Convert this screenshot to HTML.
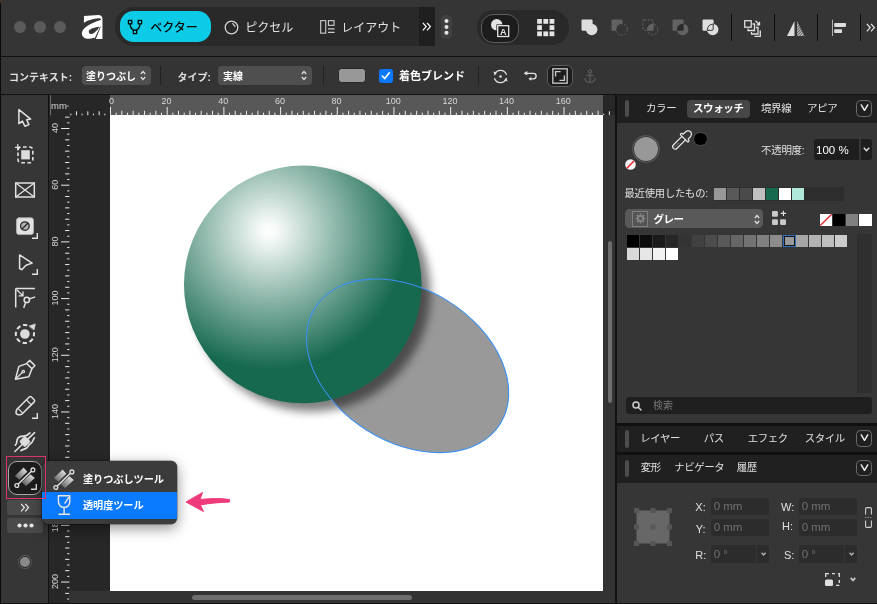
<!DOCTYPE html>
<html lang="ja">
<head>
<meta charset="utf-8">
<title>Affinity</title>
<style>
*{box-sizing:border-box;margin:0;padding:0}
html,body{width:877px;height:604px;overflow:hidden;background:#1a1a1a}
body{font-family:"Liberation Sans","Noto Sans CJK JP",sans-serif;color:#dcdcdc;font-size:11px;position:relative}
.abs{position:absolute}
#app{position:absolute;left:0;top:0;width:877px;height:604px;overflow:hidden;background:#121212;will-change:transform}
/* title bar */
#titlebar{position:absolute;left:0;top:0;width:877px;height:56px;background:#353535}
#ctxbar{position:absolute;left:0;top:57px;width:877px;height:37px;background:#343434}
.tl{position:absolute;top:21px;width:12px;height:12px;border-radius:50%;background:#5b5b5b}
.t{position:absolute;white-space:nowrap;line-height:1}
svg{position:absolute;overflow:visible}
svg{will-change:transform}
/* left tools */
#tools{position:absolute;left:0;top:95px;width:48px;height:507.600px;background:#363636}
/* canvas area */
#work{position:absolute;left:49px;top:95px;width:566px;height:507.600px;background:#272727;overflow:hidden}
/* right panel */
#panel{position:absolute;left:618px;top:95px;width:259px;height:507.600px;background:#363636;box-shadow:-1px 0 0 #363636}
.phead{position:absolute;left:-1px;width:260px;background:#202020}
.grip{position:absolute;left:7px;width:4px;border-radius:2px;background:#4d4d4d}
.vbox{position:absolute;left:238px;width:16px;height:16.500px;border:1.400px solid #6c6c6c;border-radius:4.500px;margin-top:-0.700px}
.inp{position:absolute;background:#2c2c2c;border-radius:3px;color:#707070;font-size:11.5px;line-height:17px;padding-left:3px;height:17px}
.lbl{position:absolute;font-size:11px;color:#e0e0e0;line-height:1}
</style>
</head>
<body>
<div id="app">

<!-- TITLEBAR -->
<div id="titlebar">
<div class="tl" style="left:14px"></div><div class="tl" style="left:34px"></div><div class="tl" style="left:54px"></div>
<svg id="logo" style="left:70px;top:8px" width="50" height="40" viewBox="0 0 755 604">
<g fill="#ffffff"><ellipse cx="322" cy="352" rx="152" ry="103" transform="rotate(-25 322 352)"/><path d="M210 120 L425 105 Q490 105 490 172 L490 468 L380 468 L210 228 Z"/></g>
<g fill="#353535"><path d="M206 226 Q300 163 440 156 Q478 158 463 181 Q330 215 165 335 L165 226 Z"/><path d="M447 285 C400 290 330 305 298 328 C270 350 285 395 325 393 C365 390 410 340 447 285 Z"/><path d="M366 472 L389 472 L466 280 L454 283 Z"/></g>
</svg>
<!-- persona group -->
<div class="abs" style="left:115px;top:7px;width:320px;height:39px;background:#292929;border-radius:19px 0 0 19px"></div>
<div class="abs" style="left:419px;top:7px;width:16px;height:39px;background:#1f1f1f"></div>
<div class="abs" style="left:119.500px;top:11.300px;width:91.200px;height:31px;background:#0bcbe6;border-radius:13.500px"></div>
<svg style="left:127.200px;top:19.400px" width="16" height="16" viewBox="0 0 18 18" fill="none" stroke="#000" stroke-width="1.4"><path d="M3.5 5.5 C3.5 10 6 12 9 13 C12 12 14.5 10 14.5 5.500"/><rect x="1.600" y="1.600" width="3.800" height="3.800" fill="#0bcbe6"/><rect x="12.600" y="1.600" width="3.800" height="3.800" fill="#0bcbe6"/><rect x="7.100" y="12.600" width="3.800" height="3.800" fill="#0bcbe6"/></svg>
<div class="t" style="left:150.300px;top:21.600px;font-size:12px;color:#000;font-weight:500">ベクター</div>
<svg style="left:223.500px;top:19.800px" width="15" height="15" viewBox="0 0 15 15" fill="none" stroke="#d4d4d4" stroke-width="1.300"><circle cx="7.500" cy="7.500" r="6.300"/><path d="M8.800 3.600 L11 6.300" stroke-linecap="round"/></svg>
<div class="t" style="left:245.200px;top:21.600px;font-size:12px;color:#e2e2e2">ピクセル</div>
<svg style="left:319.500px;top:19.800px" width="15" height="14" viewBox="0 0 16 15" fill="none" stroke="#cccccc" stroke-width="1.2"><rect x="0.700" y="0.700" width="5.400" height="13.400"/><rect x="9" y="0.700" width="6" height="5"/><path d="M8.500 9.500 H15.600 M8.500 13.300 H15.600"/></svg>
<div class="t" style="left:341.200px;top:21.600px;font-size:12px;color:#e2e2e2">レイアウト</div>
<svg style="left:422.300px;top:22.200px" width="9.200" height="9.200" viewBox="0 0 11 11" fill="none" stroke="#fff" stroke-width="1.5"><path d="M1 1 L5 5.500 L1 10 M6 1 L10 5.500 L6 10"/></svg>
<div class="abs" style="left:441.200px;top:15px;width:11.200px;height:24px;background:#404040;border-radius:4.500px"></div>
<svg style="left:441px;top:15px" width="11" height="24" viewBox="0 0 11 24" fill="#e6e6e6"><circle cx="5.500" cy="6.100" r="2"/><circle cx="5.500" cy="11.900" r="2"/><circle cx="5.500" cy="17.700" r="2"/></svg>
<!-- toggle group -->
<div class="abs" style="left:477px;top:10px;width:92px;height:35px;background:#292929;border-radius:17px"></div>
<div class="abs" style="left:480.700px;top:13.600px;width:38.300px;height:29.200px;background:#1c1c1c;border:1.200px solid #5e5e5e;border-radius:12px"></div>
<svg style="left:490px;top:18px" width="22" height="20" viewBox="0 0 22 20"><circle cx="6.700" cy="6.700" r="5.700" fill="#e4e4e4"/><rect x="6.400" y="6.400" width="13.400" height="13.200" fill="#1c1c1c"/><rect x="7.700" y="7.700" width="11" height="10.800" fill="#1c1c1c" stroke="#e4e4e4" stroke-width="1.300"/><text x="13.200" y="16.500" font-size="9" font-weight="bold" fill="#e4e4e4" text-anchor="middle" font-family="Liberation Sans,sans-serif">A</text></svg>
<svg style="left:537px;top:19px" width="17.500" height="17.200" viewBox="0 0 18 18" fill="#e4e4e4"><rect x="0" y="0" width="5" height="5"/><rect x="6.500" y="0" width="5" height="5"/><rect x="13" y="0" width="5" height="5"/><rect x="0" y="6.500" width="5" height="5"/><rect x="13" y="6.500" width="5" height="5"/><rect x="0" y="13" width="5" height="5"/><rect x="6.500" y="13" width="5" height="5"/><rect x="13" y="13" width="5" height="5"/></svg>
<!-- boolean ops -->
<svg style="left:581.4px;top:19.400px" width="17" height="17" viewBox="0 0 17 17"><rect x="0.500" y="0.400" width="11.100" height="11.300" rx="1.200" fill="#dedede"/><circle cx="10.700" cy="10.500" r="5.700" fill="#dedede"/></svg>
<svg style="left:611.4px;top:19.400px" width="17" height="17" viewBox="0 0 17 17"><rect x="0.500" y="0.400" width="11.100" height="11.300" rx="1.200" fill="#626262"/><circle cx="10.700" cy="10.500" r="5.700" fill="#353535" stroke="#626262" stroke-width="1" stroke-dasharray="2.200 1.400"/></svg>
<svg style="left:641.5px;top:19.400px" width="17" height="17" viewBox="0 0 17 17"><defs><clipPath id="cpI"><rect x="0.500" y="0.400" width="11.100" height="11.300" rx="1.200"/></clipPath></defs><circle cx="10.700" cy="10.500" r="5.700" fill="#626262" clip-path="url(#cpI)"/><rect x="1" y="0.900" width="10.100" height="10.300" rx="1" fill="none" stroke="#626262" stroke-width="1" stroke-dasharray="2.200 1.400"/><circle cx="10.700" cy="10.500" r="5.200" fill="none" stroke="#626262" stroke-width="1" stroke-dasharray="2.200 1.400"/></svg>
<svg style="left:671.7px;top:19.400px" width="17" height="17" viewBox="0 0 17 17"><defs><clipPath id="cpX"><rect x="0.500" y="0.400" width="11.100" height="11.300" rx="1.200"/></clipPath></defs><rect x="0.500" y="0.400" width="11.100" height="11.300" rx="1.200" fill="#626262"/><circle cx="10.700" cy="10.500" r="5.700" fill="#626262"/><circle cx="10.700" cy="10.500" r="5.700" fill="#2a2a2a" clip-path="url(#cpX)"/></svg>
<svg style="left:701.5px;top:19.400px" width="17" height="17" viewBox="0 0 17 17"><defs><clipPath id="cpC"><circle cx="10.700" cy="10.500" r="5.700"/></clipPath><clipPath id="cpR"><rect x="0.500" y="0.400" width="11.100" height="11.300" rx="1.200"/></clipPath></defs><rect x="0.500" y="0.400" width="11.100" height="11.300" rx="1.200" fill="#dedede"/><circle cx="10.700" cy="10.500" r="5.700" fill="#dedede"/><rect x="0.900" y="0.800" width="10.300" height="10.500" rx="1" fill="none" stroke="#353535" stroke-width="1" clip-path="url(#cpC)"/><circle cx="10.700" cy="10.500" r="5.300" fill="none" stroke="#353535" stroke-width="1" clip-path="url(#cpR)"/></svg>
<div class="abs" style="left:731.2px;top:14px;width:1.100px;height:27.200px;background:#0a0a0a"></div>
<svg style="left:744px;top:20px" width="18" height="17" viewBox="0 0 18 17" fill="none" stroke="#dedede" stroke-width="1.300"><rect x="0.700" y="0.700" width="6.500" height="6.500"/><path d="M4 8.500 V10.500 H10.500 V4 H8.500"/><path d="M7.500 12 V14 H14 V7.500 H12"/><path d="M10.500 16.300 H16.300 V10.500" /><path d="M11.500 0.800 L15.500 4.800 M15.500 1.800 V4.800 H12.500"/></svg>
<div class="abs" style="left:773.9px;top:14px;width:1.100px;height:27.200px;background:#0a0a0a"></div>
<svg style="left:787px;top:21px" width="18" height="15" viewBox="0 0 18 15"><path d="M0 15 L7.500 0 L7.500 15 Z" fill="#dedede"/><defs><pattern id="hat" width="2" height="2" patternUnits="userSpaceOnUse" patternTransform="rotate(45)"><rect width="2" height="2" fill="#555"/><rect width="1" height="2" fill="#cfcfcf"/></pattern></defs><path d="M10 0 L17.500 15 L10 15 Z" fill="url(#hat)"/></svg>
<div class="abs" style="left:816.8px;top:14px;width:1.100px;height:27.200px;background:#0a0a0a"></div>
<svg style="left:831px;top:20px" width="16" height="16" viewBox="0 0 16 16" fill="#dedede"><rect x="1" y="-0.300" width="1" height="16.300" fill="#b0b0b0"/><rect x="3.200" y="3.100" width="11.800" height="3.800" rx="0.800"/><rect x="3.200" y="9.300" width="7.800" height="3.800" rx="0.800"/></svg>
<div class="abs" style="left:859.9px;top:14px;width:1.100px;height:27.200px;background:#0a0a0a"></div>
<svg style="left:866.200px;top:23.300px" width="9.200" height="9.200" viewBox="0 0 11 11" fill="none" stroke="#e6e6e6" stroke-width="1.500"><path d="M1 1 L5 5.500 L1 10 M6 1 L10 5.500 L6 10"/></svg>
</div>

<!-- CONTEXT BAR -->
<div id="ctxbar">
<div class="t" style="left:9px;top:15.500px;font-size:10px;font-weight:bold;color:#e0e0e0">コンテキスト:</div>
<div class="abs" style="left:82px;top:9px;width:69px;height:19px;background:#4f4f4f;border-radius:4px"></div>
<div class="t" style="left:86px;top:15px;font-size:10px;font-weight:bold;color:#fff">塗りつぶし</div>
<svg style="left:140px;top:13px" width="6" height="11" viewBox="0 0 6 11" fill="none" stroke="#e0e0e0" stroke-width="1.200"><path d="M0.800 4 L3 1.500 L5.200 4 M0.800 7 L3 9.500 L5.200 7"/></svg>
<div class="abs" style="left:160px;top:9px;width:1px;height:19px;background:#222"></div>
<div class="t" style="left:177.500px;top:15.500px;font-size:10px;font-weight:bold;color:#e0e0e0">タイプ:</div>
<div class="abs" style="left:218px;top:9px;width:94px;height:19px;background:#4f4f4f;border-radius:4px"></div>
<div class="t" style="left:223px;top:15px;font-size:10px;font-weight:bold;color:#fff">実線</div>
<svg style="left:301px;top:13px" width="6" height="11" viewBox="0 0 6 11" fill="none" stroke="#e0e0e0" stroke-width="1.200"><path d="M0.800 4 L3 1.500 L5.200 4 M0.800 7 L3 9.500 L5.200 7"/></svg>
<div class="abs" style="left:323px;top:9px;width:1px;height:19px;background:#222"></div>
<div class="abs" style="left:337.500px;top:10.500px;width:28px;height:15px;background:#989898;border-radius:3.500px;border:1px solid #262626"></div>
<div class="abs" style="left:379px;top:12px;width:14px;height:13.500px;background:#0b79fe;border-radius:3px"></div>
<svg style="left:379px;top:12px" width="13.500" height="13.500" viewBox="0 0 13.500 13.500" fill="none" stroke="#fff" stroke-width="1.600" stroke-linecap="round" stroke-linejoin="round"><path d="M3.300 7 L5.800 9.600 L10.300 3.800"/></svg>
<div class="t" style="left:399px;top:14px;font-size:11px;font-weight:bold;color:#fff">着色ブレンド</div>
<div class="abs" style="left:478px;top:9px;width:1px;height:19px;background:#222"></div>
<svg style="left:492.700px;top:11.500px" width="15" height="15" viewBox="0 0 15 15" fill="none" stroke="#e0e0e0" stroke-width="1.300" stroke-linecap="round"><path d="M2 5 A6.100 6.100 0 0 1 13.300 5.300 M13 10 A6.100 6.100 0 0 1 1.700 9.700"/><path d="M0.500 2.600 L4 3.600 L1.500 6.400 Z M14.500 12.400 L11 11.400 L13.500 8.600 Z" fill="#e0e0e0" stroke="none"/><circle cx="7.500" cy="7.500" r="1.300" fill="#e0e0e0" stroke="none"/></svg>
<svg style="left:523px;top:13px" width="15" height="12" viewBox="0 0 15 12" fill="none" stroke="#e0e0e0" stroke-width="1.300" stroke-linecap="round"><path d="M3.500 3.300 H10.400 A2.750 2.750 0 0 1 10.400 8.800 H8"/><path d="M0.600 3.300 L4.300 1 V5.600 Z M5.300 8.800 L8.300 6.900 V10.700 Z" fill="#e0e0e0" stroke="none"/></svg>
<div class="abs" style="left:547.300px;top:7.700px;width:25.800px;height:22.300px;background:#1d1d1d;border:1.200px solid #5c5c5c;border-radius:6px"></div>
<svg style="left:552.200px;top:11px" width="16" height="16" viewBox="0 0 16 16" fill="none"><rect x="0.800" y="0.800" width="14.400" height="14.400" stroke="#b4b4b4" stroke-width="1.500"/><path d="M3.600 8.600 V3.600 H8.600 M12.400 7.400 V12.400 H7.400" stroke="#c8c8c8" stroke-width="1.400"/></svg>
<svg style="left:584px;top:11.800px" width="12" height="15" viewBox="0 0 12 15" fill="none" stroke="#595959" stroke-width="1.300" stroke-linecap="round"><circle cx="6" cy="2.500" r="1.600"/><path d="M6 4.200 V13.500 M3 6.500 H9 M1 9.500 C1.500 12.500 4 13.500 6 13.500 C8 13.500 10.500 12.500 11 9.500"/></svg>
</div>

<!-- LEFT TOOLS -->
<div id="tools">
<svg style="left:13px;top:11px" width="24" height="24" viewBox="0 0 24 24" fill="none" stroke="#e2e2e2" stroke-width="1.500" stroke-linejoin="round" stroke-linecap="round"><path d="M5.900 3.600 V17.700 L9.400 15.100 L11.900 20.300 L15.900 18.600 L13.700 13.800 L17.700 13.100 Z"/></svg>
<svg style="left:13px;top:47px" width="24" height="24" viewBox="0 0 24 24" fill="none" stroke="#e2e2e2" stroke-width="1.500" stroke-linejoin="round" stroke-linecap="round"><rect x="5" y="5" width="14.800" height="15.700" rx="3" stroke-dasharray="3.700 2.400" stroke-dashoffset="-2" stroke-linecap="butt" stroke-width="1.600"/><rect x="8.200" y="8.200" width="8.600" height="9.200" fill="#dcdcdc" stroke="none"/><path d="M2.400 5.300 H7.100 M4.750 2.700 V7.900" stroke-width="1.300"/></svg>
<svg style="left:13px;top:83px" width="24" height="24" viewBox="0 0 24 24" fill="none" stroke="#e2e2e2" stroke-width="1.500" stroke-linejoin="round" stroke-linecap="round" stroke-linejoin="miter"><rect x="2.700" y="5" width="18.600" height="14"/><path d="M2.700 5 L21.300 19 M21.300 5 L2.700 19" stroke-width="1.200"/></svg>
<svg style="left:13px;top:119px" width="24" height="24" viewBox="0 0 24 24" fill="none" stroke="#e2e2e2" stroke-width="1.500" stroke-linejoin="round" stroke-linecap="round"><defs><pattern id="stip" width="2" height="2" patternUnits="userSpaceOnUse"><rect width="2" height="2" fill="#8c8c8c"/><rect width="1" height="1" fill="#d2d2d2"/><rect x="1" y="1" width="1" height="1" fill="#d2d2d2"/></pattern></defs><rect x="3.500" y="3.800" width="17" height="16.800" rx="2.500" fill="url(#stip)" stroke="#b4b4b4" stroke-width="0.800"/><circle cx="11.900" cy="12.100" r="4.300" fill="#b0b0b0" stroke="#2a2a2a" stroke-width="1.300"/><path d="M9 15 L14.800 9.200" stroke="#2a2a2a" stroke-width="1.300"/></svg>
<svg style="left:32px;top:137.7px" width="6" height="6" viewBox="0 0 6 6" fill="none" stroke="#e2e2e2" stroke-width="1.400"><path d="M5.300 0 V5.300 H0"/></svg>
<svg style="left:13px;top:155px" width="24" height="24" viewBox="0 0 24 24" fill="none" stroke="#e2e2e2" stroke-width="1.500" stroke-linejoin="round" stroke-linecap="round"><path d="M6.600 4.900 L19.100 13.100 L13 15.300 L8.700 19.700 L6.600 18.500 Z"/></svg>
<svg style="left:32px;top:173.7px" width="6" height="6" viewBox="0 0 6 6" fill="none" stroke="#e2e2e2" stroke-width="1.400"><path d="M5.300 0 V5.300 H0"/></svg>
<svg style="left:13px;top:191px" width="24" height="24" viewBox="0 0 24 24" fill="none" stroke="#e2e2e2" stroke-width="1.500" stroke-linejoin="round" stroke-linecap="round"><path d="M2.700 2.600 V21.500 M2.700 2.600 H21.900" stroke-linecap="butt"/><path d="M4 4 L9.800 9.700 M10 6 V9.900 H6.100" stroke-width="1.300"/><circle cx="13.800" cy="13.900" r="2.700"/><path d="M12.700 16.400 L10.900 21.200 M16.300 12.900 L21.600 11.100"/></svg>
<svg style="left:13px;top:227px" width="24" height="24" viewBox="0 0 24 24" fill="none" stroke="#e2e2e2" stroke-width="1.500" stroke-linejoin="round" stroke-linecap="round"><circle cx="11.900" cy="12" r="9.100" stroke-dasharray="4.400 2.747" stroke-dashoffset="2.200" stroke-linecap="butt" stroke-width="2"/><path d="M13.500 0 L24 0 L24 10 L19 9 L16 5 Z" fill="#363636" stroke="none"/><circle cx="11.900" cy="12" r="4.800" fill="#dcdcdc" stroke="none"/><path d="M16.300 3.900 L22.400 1.900 L21 7.700 Z" fill="#dcdcdc" stroke="#dcdcdc" stroke-width="0.600"/></svg>
<svg style="left:13px;top:263px" width="24" height="24" viewBox="0 0 24 24" fill="none" stroke="#e2e2e2" stroke-width="1.500" stroke-linejoin="round" stroke-linecap="round"><path d="M16.600 2.400 L21.900 7.600 L18.900 10.700 L13.700 5.500 Z"/><path d="M13.700 5.600 L5.900 8.400 L2.400 21.200 L15.800 18.800 L18.900 10.700"/><path d="M2.700 20.900 L9.500 14.300" stroke-width="1.300"/><circle cx="10.300" cy="13.500" r="1.200" stroke-width="1.300"/></svg>
<svg style="left:13px;top:299px" width="24" height="24" viewBox="0 0 24 24" fill="none" stroke="#e2e2e2" stroke-width="1.500" stroke-linejoin="round" stroke-linecap="round"><path d="M16.300 3 L3.900 15.300 Q0.800 22.400 8.800 20.200 L21.200 7.900 A1.600 1.600 0 0 0 21.200 5.700 L18.500 3 A1.600 1.600 0 0 0 16.300 3 Z"/><path d="M13.400 5.900 L18.400 10.900 M5.500 14.900 L9.500 18.900" stroke-width="1.300"/></svg>
<svg style="left:32px;top:317.7px" width="6" height="6" viewBox="0 0 6 6" fill="none" stroke="#e2e2e2" stroke-width="1.400"><path d="M5.300 0 V5.300 H0"/></svg>
<svg style="left:13px;top:335px" width="24" height="24" viewBox="0 0 24 24" fill="none" stroke="#e2e2e2" stroke-width="1.500" stroke-linejoin="round" stroke-linecap="round"><rect x="-4.200" y="-4.200" width="8.400" height="8.400" rx="1.800" transform="translate(11.900 11.600) rotate(45)" fill="#dadada" stroke="none"/><path d="M1.900 21.500 L21.600 2.600"/><path d="M2.300 15.200 C4.800 13.800 2.800 10.200 5.200 7.800 C7.800 5.200 11 6.800 13.400 5.500 C15.200 4.500 15.600 3.500 16.900 2.900" stroke-width="1.700"/><path d="M8 20.600 C9.600 19.300 10.600 19.600 12.600 18.600 C15.400 17.400 15 15.200 17.400 13.800 C20 12.200 19.800 9.800 21.300 8" stroke-width="1.700"/></svg>
<div class="abs" style="left:8px;top:366px;width:34px;height:34px;background:#1d1d1d;border:1.500px solid #a8a8a8;border-radius:9px"></div>
<svg style="left:12.800px;top:370.100px" width="24" height="24" viewBox="0 0 24 24" fill="none" stroke="#e2e2e2" stroke-width="1.500" stroke-linejoin="round" stroke-linecap="round"><defs><linearGradient id="gfA" x1="1" y1="0" x2="0" y2="1"><stop offset="0" stop-color="#f4f4f4"/><stop offset="1" stop-color="#4a4a4a"/></linearGradient></defs><path d="M1.900 11.100 L10.600 2.400 L14.300 6.800 L6.300 14.800 Z" fill="url(#gfA)" stroke="none"/><path d="M8.700 17.300 L17.400 9.200 L21.800 13 L13.100 21 Z" fill="url(#gfA)" stroke="none"/><path d="M5 19.300 L18.700 6.100" stroke-width="1.400"/><circle cx="3.800" cy="20.500" r="1.900" fill="#1d1d1d" stroke-width="1.300"/><circle cx="19.900" cy="4.900" r="1.900" fill="#1d1d1d" stroke-width="1.300"/></svg>
<svg style="left:31px;top:388.7px" width="6" height="6" viewBox="0 0 6 6" fill="none" stroke="#e2e2e2" stroke-width="1.400"><path d="M5.300 0 V5.300 H0"/></svg>
<div class="abs" style="left:7px;top:405.300px;width:36px;height:14.500px;background:#4a4a4a;border-radius:3px"></div>
<svg style="left:20.300px;top:408px" width="9.600" height="9.200" viewBox="0 0 11 11" fill="none" stroke="#f0f0f0" stroke-width="1.400"><path d="M1 1 L5 5.500 L1 10 M6 1 L10 5.500 L6 10"/></svg>
<div class="abs" style="left:7px;top:423.100px;width:36px;height:15.200px;background:#4a4a4a;border-radius:3px"></div>
<svg style="left:16.500px;top:428.200px" width="17" height="5" viewBox="0 0 17 5" fill="#e6e6e6"><circle cx="2.500" cy="2.500" r="2.100"/><circle cx="8.500" cy="2.500" r="2.100"/><circle cx="14.500" cy="2.500" r="2.100"/></svg>
<div class="abs" style="left:19.700px;top:461.500px;width:10.800px;height:10.800px;border-radius:50%;background:#8a8a8a;box-shadow:0 0 0 1px #2c2c2c,0 0 0 1.900px #5a5a5a"></div>
</div>

<!-- WORK AREA -->
<div id="work">
<div class="abs" style="left:61px;top:0;width:493.3px;height:20.3px;background:#585858"></div>
<div class="abs" id="page" style="left:61px;top:20.3px;width:493.3px;height:475.3px;background:#fff"></div>
<svg style="left:0;top:0" width="567" height="21" viewBox="0 0 567 21"><path d="M21.82 20.3 v-1.6 M27.48 20.3 v-4 M33.15 20.3 v-1.6 M38.82 20.3 v-4 M44.49 20.3 v-1.6 M50.16 20.3 v-4 M55.83 20.3 v-1.6 M61.50 20.3 v-8.3 M67.17 20.3 v-2.6 M72.84 20.3 v-4.5 M78.51 20.3 v-2.6 M84.18 20.3 v-4.5 M89.85 20.3 v-2.6 M95.52 20.3 v-4.5 M101.18 20.3 v-2.6 M106.85 20.3 v-4.5 M112.52 20.3 v-2.6 M118.19 20.3 v-8.3 M123.86 20.3 v-2.6 M129.53 20.3 v-4.5 M135.20 20.3 v-2.6 M140.87 20.3 v-4.5 M146.54 20.3 v-2.6 M152.21 20.3 v-4.5 M157.88 20.3 v-2.6 M163.55 20.3 v-4.5 M169.21 20.3 v-2.6 M174.88 20.3 v-8.3 M180.55 20.3 v-2.6 M186.22 20.3 v-4.5 M191.89 20.3 v-2.6 M197.56 20.3 v-4.5 M203.23 20.3 v-2.6 M208.90 20.3 v-4.5 M214.57 20.3 v-2.6 M220.24 20.3 v-4.5 M225.91 20.3 v-2.6 M231.58 20.3 v-8.3 M237.25 20.3 v-2.6 M242.91 20.3 v-4.5 M248.58 20.3 v-2.6 M254.25 20.3 v-4.5 M259.92 20.3 v-2.6 M265.59 20.3 v-4.5 M271.26 20.3 v-2.6 M276.93 20.3 v-4.5 M282.60 20.3 v-2.6 M288.27 20.3 v-8.3 M293.94 20.3 v-2.6 M299.61 20.3 v-4.5 M305.28 20.3 v-2.6 M310.94 20.3 v-4.5 M316.61 20.3 v-2.6 M322.28 20.3 v-4.5 M327.95 20.3 v-2.6 M333.62 20.3 v-4.5 M339.29 20.3 v-2.6 M344.96 20.3 v-8.3 M350.63 20.3 v-2.6 M356.30 20.3 v-4.5 M361.97 20.3 v-2.6 M367.64 20.3 v-4.5 M373.31 20.3 v-2.6 M378.98 20.3 v-4.5 M384.64 20.3 v-2.6 M390.31 20.3 v-4.5 M395.98 20.3 v-2.6 M401.65 20.3 v-8.3 M407.32 20.3 v-2.6 M412.99 20.3 v-4.5 M418.66 20.3 v-2.6 M424.33 20.3 v-4.5 M430.00 20.3 v-2.6 M435.67 20.3 v-4.5 M441.34 20.3 v-2.6 M447.01 20.3 v-4.5 M452.67 20.3 v-2.6 M458.34 20.3 v-8.3 M464.01 20.3 v-2.6 M469.68 20.3 v-4.5 M475.35 20.3 v-2.6 M481.02 20.3 v-4.5 M486.69 20.3 v-2.6 M492.36 20.3 v-4.5 M498.03 20.3 v-2.6 M503.70 20.3 v-4.5 M509.37 20.3 v-2.6 M515.04 20.3 v-8.3 M520.71 20.3 v-2.6 M526.37 20.3 v-4.5 M532.04 20.3 v-2.6 M537.71 20.3 v-4.5 M543.38 20.3 v-2.6 M549.05 20.3 v-4.5 M554.72 20.3 v-1.6 M560.39 20.3 v-4" stroke="#ececec" stroke-width="1" fill="none"/>
<g font-size="9" fill="#d6d6d6" font-family="Liberation Sans,sans-serif"><text x="60.1" y="9.300">0</text><text x="117.5" y="9.300" text-anchor="middle">20</text><text x="174.2" y="9.300" text-anchor="middle">40</text><text x="230.9" y="9.300" text-anchor="middle">60</text><text x="287.6" y="9.300" text-anchor="middle">80</text><text x="344.3" y="9.300" text-anchor="middle">100</text><text x="401.0" y="9.300" text-anchor="middle">120</text><text x="457.6" y="9.300" text-anchor="middle">140</text><text x="514.3" y="9.300" text-anchor="middle">160</text></g></svg>
<svg style="left:0;top:0" width="22" height="507" viewBox="0 0 22 507"><path d="M20.4 22.16 h-4.3 M20.4 27.83 h-2.2 M20.4 33.50 h-8.3 M20.4 39.17 h-2.2 M20.4 44.84 h-4.3 M20.4 50.51 h-2.2 M20.4 56.18 h-4.3 M20.4 61.85 h-2.2 M20.4 67.52 h-4.3 M20.4 73.18 h-2.2 M20.4 78.85 h-4.3 M20.4 84.52 h-2.2 M20.4 90.19 h-8.3 M20.4 95.86 h-2.2 M20.4 101.53 h-4.3 M20.4 107.20 h-2.2 M20.4 112.87 h-4.3 M20.4 118.54 h-2.2 M20.4 124.21 h-4.3 M20.4 129.88 h-2.2 M20.4 135.55 h-4.3 M20.4 141.21 h-2.2 M20.4 146.88 h-8.3 M20.4 152.55 h-2.2 M20.4 158.22 h-4.3 M20.4 163.89 h-2.2 M20.4 169.56 h-4.3 M20.4 175.23 h-2.2 M20.4 180.90 h-4.3 M20.4 186.57 h-2.2 M20.4 192.24 h-4.3 M20.4 197.91 h-2.2 M20.4 203.58 h-8.3 M20.4 209.25 h-2.2 M20.4 214.91 h-4.3 M20.4 220.58 h-2.2 M20.4 226.25 h-4.3 M20.4 231.92 h-2.2 M20.4 237.59 h-4.3 M20.4 243.26 h-2.2 M20.4 248.93 h-4.3 M20.4 254.60 h-2.2 M20.4 260.27 h-8.3 M20.4 265.94 h-2.2 M20.4 271.61 h-4.3 M20.4 277.28 h-2.2 M20.4 282.94 h-4.3 M20.4 288.61 h-2.2 M20.4 294.28 h-4.3 M20.4 299.95 h-2.2 M20.4 305.62 h-4.3 M20.4 311.29 h-2.2 M20.4 316.96 h-8.3 M20.4 322.63 h-2.2 M20.4 328.30 h-4.3 M20.4 333.97 h-2.2 M20.4 339.64 h-4.3 M20.4 345.31 h-2.2 M20.4 350.98 h-4.3 M20.4 356.64 h-2.2 M20.4 362.31 h-4.3 M20.4 367.98 h-2.2 M20.4 373.65 h-8.3 M20.4 379.32 h-2.2 M20.4 384.99 h-4.3 M20.4 390.66 h-2.2 M20.4 396.33 h-4.3 M20.4 402.00 h-2.2 M20.4 407.67 h-4.3 M20.4 413.34 h-2.2 M20.4 419.01 h-4.3 M20.4 424.67 h-2.2 M20.4 430.34 h-8.3 M20.4 436.01 h-2.2 M20.4 441.68 h-4.3 M20.4 447.35 h-2.2 M20.4 453.02 h-4.3 M20.4 458.69 h-2.2 M20.4 464.36 h-4.3 M20.4 470.03 h-2.2 M20.4 475.70 h-4.3 M20.4 481.37 h-2.2 M20.4 487.04 h-8.3 M20.4 492.71 h-2.2 M20.4 498.37 h-4.3 M20.4 504.04 h-2.2 M20.4 509.71 h-4.3 M20.4 515.38 h-2.2" stroke="#ececec" stroke-width="1" fill="none"/>
<g font-size="9" fill="#d6d6d6" font-family="Liberation Sans,sans-serif"><text transform="translate(9.300 33.0) rotate(-90)" text-anchor="middle">40</text><text transform="translate(9.300 89.7) rotate(-90)" text-anchor="middle">60</text><text transform="translate(9.300 146.4) rotate(-90)" text-anchor="middle">80</text><text transform="translate(9.300 203.1) rotate(-90)" text-anchor="middle">100</text><text transform="translate(9.300 259.8) rotate(-90)" text-anchor="middle">120</text><text transform="translate(9.300 316.5) rotate(-90)" text-anchor="middle">140</text><text transform="translate(9.300 373.2) rotate(-90)" text-anchor="middle">160</text><text transform="translate(9.300 429.8) rotate(-90)" text-anchor="middle">180</text><text transform="translate(9.300 486.5) rotate(-90)" text-anchor="middle">200</text></g>
<path d="M1.500 0 V20.300" stroke="#6a6a6a" stroke-width="1"/><text x="2" y="14" font-size="9.500" fill="#d6d6d6" font-family="Liberation Sans,sans-serif">mm</text><path d="M17 11 h3" stroke="#9a9a9a" stroke-width="1"/></svg>
<svg style="left:0;top:0" width="567" height="507" viewBox="49 95 567 507">
<defs>
<radialGradient id="sph" gradientUnits="userSpaceOnUse" cx="269" cy="231" r="138" fx="269" fy="231">
<stop offset="0" stop-color="#ffffff"/><stop offset="0.06" stop-color="#f6faf9"/><stop offset="0.5" stop-color="#8bb5a8"/><stop offset="1" stop-color="#16694f"/>
</radialGradient>
<filter id="sh" x="-20%" y="-20%" width="150%" height="150%"><feGaussianBlur stdDeviation="5"/></filter>
</defs>
<ellipse cx="407.600" cy="365.800" rx="109.300" ry="76.300" transform="rotate(32 407.600 365.800)" fill="#999999"/>
<circle cx="311.500" cy="292.500" r="119" fill="#000" opacity="0.5" filter="url(#sh)"/>
<circle cx="302.800" cy="284.400" r="118.800" fill="url(#sph)"/>
<ellipse cx="407.600" cy="365.800" rx="109.300" ry="76.300" transform="rotate(32 407.600 365.800)" fill="none" stroke="#3b8ff2" stroke-width="1.100"/>
</svg>

<div class="abs" style="left:554.3px;top:20.3px;width:11.7px;height:490px;background:#333"></div>
<div class="abs" style="left:20.2px;top:495.6px;width:560px;height:20px;background:#333"></div>
<div class="abs" style="left:558.500px;top:146px;width:4.500px;height:162px;background:#6e6e6e;border-radius:2.500px"></div>
<div class="abs" style="left:143px;top:499.500px;width:220px;height:5.500px;background:#6e6e6e;border-radius:2.750px"></div>
</div>

<!-- RIGHT PANEL -->
<div id="panel">
<div class="phead" style="top:0;height:28px"></div>
<div class="grip" style="top:5px;height:17px"></div>
<div class="t" style="left:28px;top:7.500px;font-size:10.500px;letter-spacing:-0.400px;color:#e0e0e0">カラー</div>
<div class="abs" style="left:69px;top:4.500px;width:63px;height:18.500px;background:#464646;border-radius:4px"></div>
<div class="t" style="left:75px;top:7.500px;font-size:10.500px;letter-spacing:-0.400px;font-weight:bold;color:#fff">スウォッチ</div>
<div class="t" style="left:143px;top:7.500px;font-size:10.500px;letter-spacing:-0.400px;color:#e0e0e0">境界線</div>
<div class="t" style="left:189px;top:7.500px;font-size:10.500px;letter-spacing:-0.400px;color:#e0e0e0">アピア</div>
<div class="vbox" style="top:6px"></div><svg style="left:241.500px;top:9.2px" width="9" height="7.400" viewBox="0 0 9 8" fill="none" stroke="#f0f0f0" stroke-width="1.600" stroke-linecap="round" stroke-linejoin="round"><path d="M1 1 L4.500 6.800 L8 1"/></svg>
<div class="abs" style="left:15.800px;top:41.700px;width:24.400px;height:24.400px;border-radius:50%;background:#989898;box-shadow:0 0 0 0.700px #2e2e2e,0 0 0 1.800px #5e5e5e"></div>
<svg style="left:7.100px;top:64px" width="11" height="11" viewBox="0 0 11 11"><circle cx="5.500" cy="5.500" r="5.300" fill="#f4f4f4"/><path d="M1.800 9.200 L9.200 1.800" stroke="#e8232f" stroke-width="1.500"/></svg>
<svg style="left:54px;top:34.700px" width="20" height="20" viewBox="0 0 20.500 20.500" fill="none" stroke="#e4e4e4" stroke-width="1.300" stroke-linejoin="round" stroke-linecap="round"><path d="M13.200 2.600 C14.800 0.600 17.600 0.400 19 1.800 C20.400 3.200 20.200 6 18.200 7.600 L16.600 9.200 L17.300 10.600 C17.700 11.400 16.600 12.500 15.800 12.100 L8.700 5 C8.300 4.200 9.400 3.100 10.200 3.500 L11.600 4.200 Z"/><path d="M10.200 6.500 L1.600 15.100 C0.500 16.200 0.500 17.800 1.500 18.800 C2.500 19.800 4.100 19.800 5.200 18.700 L13.800 10.100"/><path d="M3.500 16.800 L6.500 13.800" stroke-width="1" stroke-dasharray="0.800 0.900" stroke-linecap="butt"/></svg>
<div class="abs" style="left:76.200px;top:38px;width:12.400px;height:12.400px;border-radius:50%;background:#000;box-shadow:0 0 0 0.900px #484848"></div>
<div class="t" style="left:143px;top:50px;font-size:10.500px;letter-spacing:-0.300px;color:#e0e0e0">不透明度:</div>
<div class="abs" style="left:195.500px;top:44px;width:45px;height:21px;background:#1e1e1e;border-radius:3px 0 0 3px"></div>
<div class="t" style="left:198px;top:49.500px;font-size:11.500px;color:#fff">100 %</div>
<div class="abs" style="left:242.500px;top:44px;width:11.500px;height:21px;background:#1e1e1e;border-radius:0 3px 3px 0"></div>
<svg style="left:245px;top:51.500px" width="7" height="5" viewBox="0 0 7 5" fill="none" stroke="#e0e0e0" stroke-width="1.400"><path d="M0.800 0.800 L3.500 3.800 L6.200 0.800"/></svg>
<div class="t" style="left:6.500px;top:94px;font-size:10.300px;letter-spacing:-0.200px;color:#e0e0e0">最近使用したもの:</div>
<div class="abs" style="left:95.500px;top:91.800px;width:130.500px;height:14px;background:#2d2d2d"></div>
<div class="abs" style="left:96.2px;top:92.900px;width:11.800px;height:11.900px;background:#989898"></div>
<div class="abs" style="left:109.2px;top:92.900px;width:11.800px;height:11.900px;background:#595959"></div>
<div class="abs" style="left:122.2px;top:92.900px;width:11.800px;height:11.900px;background:#4a4a4a"></div>
<div class="abs" style="left:135.2px;top:92.900px;width:11.800px;height:11.900px;background:#c0c0c0"></div>
<div class="abs" style="left:148.2px;top:92.900px;width:11.800px;height:11.900px;background:#17694f"></div>
<div class="abs" style="left:161.2px;top:92.900px;width:11.800px;height:11.900px;background:#ffffff"></div>
<div class="abs" style="left:174.2px;top:92.900px;width:11.800px;height:11.900px;background:#b0e9da"></div>
<div class="abs" style="left:7px;top:113.600px;width:138px;height:19.600px;background:#595959;border-radius:4.500px"></div>
<div class="abs" style="left:14px;top:115.500px;width:16px;height:16px;border:1.200px solid #808080;background:#545454"></div>
<svg style="left:16.500px;top:118px" width="11" height="11" viewBox="0 0 11 11" fill="none" stroke="#868686"><circle cx="5.500" cy="5.500" r="2.600" stroke-width="1.800"/><path d="M5.500 0.500 V2.200 M5.500 8.800 V10.500 M0.500 5.500 H2.200 M8.800 5.500 H10.500 M2 2 L3.200 3.200 M7.800 7.800 L9 9 M9 2 L7.800 3.200 M2 9 L3.200 7.800" stroke-width="1.600"/></svg>
<div class="t" style="left:35.500px;top:118.500px;font-size:10.500px;letter-spacing:-0.500px;font-weight:bold;color:#fff">グレー</div>
<svg style="left:135.500px;top:118.500px" width="6" height="11" viewBox="0 0 6 11" fill="none" stroke="#e0e0e0" stroke-width="1.200"><path d="M0.800 4 L3 1.500 L5.200 4 M0.800 7 L3 9.500 L5.200 7"/></svg>
<svg style="left:154px;top:116.200px" width="15" height="15" viewBox="0 0 15 15" fill="#cacaca"><rect x="0" y="0" width="5.900" height="5.700" rx="1.200"/><rect x="0" y="8.200" width="5.900" height="5.700" rx="1.200"/><rect x="8.100" y="8.200" width="5.900" height="5.700" rx="1.200"/><path d="M8.800 2.400 H14 M11.400 -0.200 V5" stroke="#e4e4e4" stroke-width="1.100"/></svg>
<div class="abs" style="left:202px;top:119px;width:12px;height:11.800px;background:#fff"></div>
<svg style="left:202px;top:119px" width="12" height="11.800" viewBox="0 0 12 11.800"><path d="M0.300 11.500 L11.700 0.300" stroke="#e8232f" stroke-width="1.300"/></svg>
<div class="abs" style="left:215px;top:119px;width:12px;height:11.800px;background:#000"></div>
<div class="abs" style="left:228px;top:119px;width:12px;height:11.800px;background:#808080"></div>
<div class="abs" style="left:241px;top:119px;width:13px;height:11.800px;background:#fff"></div>
<div class="abs" style="left:8.80px;top:140.20px;width:12.100px;height:12px;background:#000000"></div>
<div class="abs" style="left:21.83px;top:140.20px;width:12.100px;height:12px;background:#0d0d0d"></div>
<div class="abs" style="left:34.86px;top:140.20px;width:12.100px;height:12px;background:#1a1a1a"></div>
<div class="abs" style="left:47.89px;top:140.20px;width:12.100px;height:12px;background:#262626"></div>
<div class="abs" style="left:60.92px;top:140.20px;width:12.100px;height:12px;background:#333333"></div>
<div class="abs" style="left:73.95px;top:140.20px;width:12.100px;height:12px;background:#404040"></div>
<div class="abs" style="left:86.98px;top:140.20px;width:12.100px;height:12px;background:#4c4c4c"></div>
<div class="abs" style="left:100.01px;top:140.20px;width:12.100px;height:12px;background:#595959"></div>
<div class="abs" style="left:113.04px;top:140.20px;width:12.100px;height:12px;background:#666666"></div>
<div class="abs" style="left:126.07px;top:140.20px;width:12.100px;height:12px;background:#737373"></div>
<div class="abs" style="left:139.10px;top:140.20px;width:12.100px;height:12px;background:#808080"></div>
<div class="abs" style="left:152.13px;top:140.20px;width:12.100px;height:12px;background:#8c8c8c"></div>
<div class="abs" style="left:165.16px;top:140.20px;width:12.100px;height:12px;background:#999999"></div>
<div class="abs" style="left:178.19px;top:140.20px;width:12.100px;height:12px;background:#a6a6a6"></div>
<div class="abs" style="left:191.22px;top:140.20px;width:12.100px;height:12px;background:#b2b2b2"></div>
<div class="abs" style="left:204.25px;top:140.20px;width:12.100px;height:12px;background:#bfbfbf"></div>
<div class="abs" style="left:217.28px;top:140.20px;width:12.100px;height:12px;background:#cccccc"></div>
<div class="abs" style="left:8.80px;top:153.15px;width:12.100px;height:12px;background:#d9d9d9"></div>
<div class="abs" style="left:21.83px;top:153.15px;width:12.100px;height:12px;background:#e6e6e6"></div>
<div class="abs" style="left:34.86px;top:153.15px;width:12.100px;height:12px;background:#f2f2f2"></div>
<div class="abs" style="left:47.89px;top:153.15px;width:12.100px;height:12px;background:#ffffff"></div>
<div class="abs" style="left:164.86px;top:139.900px;width:12.900px;height:12.600px;border:1px solid #2f6cbc;box-shadow:inset 0 0 0 1px #161616"></div>
<div class="abs" style="left:239px;top:139px;width:14.500px;height:158.500px;background:#2f2f2f"></div>
<div class="abs" style="left:8px;top:301.500px;width:245.500px;height:17.500px;background:#1f1f1f;border-radius:3px"></div>
<svg style="left:13.500px;top:305.500px" width="10" height="10" viewBox="0 0 10 10" fill="none" stroke="#d0d0d0" stroke-width="1.500" stroke-linecap="round"><circle cx="4" cy="4" r="3"/><path d="M6.300 6.300 L9 9"/></svg>
<div class="t" style="left:35px;top:306px;font-size:10px;color:#777">検索</div>
<div class="abs" style="left:-1px;top:327.800px;width:260px;height:2.800px;background:#101010"></div>
<div class="phead" style="top:330.500px;height:26.500px"></div>
<div class="grip" style="top:335px;height:17.500px"></div>
<div class="t" style="left:22.3px;top:338.600px;font-size:10.400px;letter-spacing:-0.400px;color:#e0e0e0">レイヤー</div>
<div class="t" style="left:85.8px;top:338.600px;font-size:10.400px;letter-spacing:-0.400px;color:#e0e0e0">パス</div>
<div class="t" style="left:129.8px;top:338.600px;font-size:10.400px;letter-spacing:-0.400px;color:#e0e0e0">エフェク</div>
<div class="t" style="left:186.8px;top:338.600px;font-size:10.400px;letter-spacing:-0.400px;color:#e0e0e0">スタイル</div>
<div class="vbox" style="top:336px"></div><svg style="left:241.500px;top:339.2px" width="9" height="7.400" viewBox="0 0 9 8" fill="none" stroke="#f0f0f0" stroke-width="1.600" stroke-linecap="round" stroke-linejoin="round"><path d="M1 1 L4.500 6.800 L8 1"/></svg>
<div class="abs" style="left:-1px;top:357px;width:260px;height:2.600px;background:#101010"></div>
<div class="phead" style="top:359.500px;height:28.500px"></div>
<div class="grip" style="top:364.500px;height:17.500px"></div>
<div class="t" style="left:22.7px;top:367.500px;font-size:10.400px;letter-spacing:-0.400px;color:#e0e0e0">変形</div>
<div class="t" style="left:56.2px;top:367.500px;font-size:10.400px;letter-spacing:-0.400px;color:#e0e0e0">ナビゲータ</div>
<div class="t" style="left:118.7px;top:367.500px;font-size:10.400px;letter-spacing:-0.400px;color:#e0e0e0">履歴</div>
<div class="vbox" style="top:365.5px"></div><svg style="left:241.500px;top:368.7px" width="9" height="7.400" viewBox="0 0 9 8" fill="none" stroke="#f0f0f0" stroke-width="1.600" stroke-linecap="round" stroke-linejoin="round"><path d="M1 1 L4.500 6.800 L8 1"/></svg>
<svg style="left:16.400px;top:413px" width="38" height="38" viewBox="0 0 38 38"><rect x="2.500" y="2.500" width="33" height="33" fill="#676767"/><g fill="#565656"><rect x="0" y="0" width="5" height="5"/><rect x="16.500" y="0" width="5" height="5"/><rect x="33" y="0" width="5" height="5"/><rect x="0" y="16.500" width="5" height="5"/><rect x="16.500" y="16.500" width="5" height="5" fill="#585858"/><rect x="33" y="16.500" width="5" height="5"/><rect x="0" y="33" width="5" height="5"/><rect x="16.500" y="33" width="5" height="5"/><rect x="33" y="33" width="5" height="5"/></g></svg>
<div class="lbl" style="left:77.300px;top:406.500px">X:</div>
<div class="inp" style="left:92.700px;top:402.5px;width:58.500px">0 mm</div>
<div class="lbl" style="left:163px;top:406.5px">W:</div>
<div class="inp" style="left:180.700px;top:402.5px;width:58.500px">0 mm</div>
<div class="lbl" style="left:77.800px;top:428.500px">Y:</div>
<div class="inp" style="left:92.700px;top:424px;width:58.500px">0 mm</div>
<div class="lbl" style="left:164px;top:426px">H:</div>
<div class="inp" style="left:180.700px;top:424px;width:58.500px">0 mm</div>
<div class="lbl" style="left:77.300px;top:454.500px">R:</div>
<div class="inp" style="left:92.700px;top:450px;width:58.500px;height:18px;line-height:18px">0 °</div>
<div class="lbl" style="left:166px;top:454.500px">S:</div>
<div class="inp" style="left:180.700px;top:450px;width:58.500px;height:18px;line-height:18px">0 °</div>
<div class="abs" style="left:138px;top:450px;width:1px;height:18px;background:#343434"></div>
<svg style="left:143px;top:456.800px" width="5.200" height="4" viewBox="0 0 7 5" fill="none" stroke="#b4b4b4" stroke-width="1.900"><path d="M0.800 0.800 L3.500 3.800 L6.200 0.800"/></svg>
<div class="abs" style="left:225.5px;top:450px;width:1px;height:18px;background:#343434"></div>
<svg style="left:230.5px;top:456.800px" width="5.200" height="4" viewBox="0 0 7 5" fill="none" stroke="#b4b4b4" stroke-width="1.900"><path d="M0.800 0.800 L3.500 3.800 L6.200 0.800"/></svg>
<svg style="left:246.500px;top:412px" width="7" height="21" viewBox="0 0 7 21" fill="none" stroke="#d0d0d0" stroke-width="1.100"><path d="M0.600 7.500 V1.800 A1.200 1.200 0 0 1 1.800 0.600 H5.200 A1.200 1.200 0 0 1 6.400 1.800 V7.500 M0.600 13.500 V19.200 A1.200 1.200 0 0 0 1.800 20.400 H5.200 A1.200 1.200 0 0 0 6.400 19.200 V13.500" /><path d="M0 10.500 H7" stroke="#8a8a8a" stroke-dasharray="1.500 1"/></svg>
<svg style="left:206.500px;top:477.500px" width="15" height="13" viewBox="0 0 15 13" fill="none" stroke="#e0e0e0" stroke-width="1.300"><path d="M0.700 4 V0.700 H4 M7 0.700 H10 M13 0.700 H14.300 V4 M14.300 7 V10 M14.300 12.300 H11"/><rect x="0" y="6.500" width="8" height="6.500" rx="1.500" fill="#e0e0e0" stroke="none"/></svg>
<svg style="left:232px;top:482px" width="6" height="4.600" viewBox="0 0 7 5" fill="none" stroke="#c4c4c4" stroke-width="2"><path d="M0.800 0.800 L3.500 3.800 L6.200 0.800"/></svg>
</div>

<div class="abs" style="left:0;top:0;width:1px;height:604px;background:#0a0a0a"></div>
<svg style="left:0;top:0" width="5" height="5" viewBox="0 0 5 5"><path d="M0 0 H4.500 A4.500 4.500 0 0 0 0 4.500 Z" fill="#4a3424"/></svg>
<!-- POPUP -->
<div id="popup">
<div class="abs" style="left:41.500px;top:460.500px;width:135px;height:63px;background:#3b3b3b;border-radius:6px;box-shadow:0 4px 14px rgba(0,0,0,.45),0 0 0 0.500px rgba(0,0,0,.5);overflow:hidden"><div class="abs" style="left:0;top:31.500px;width:135px;height:26.500px;background:#0a7aff"></div></div>
<svg style="left:51.500px;top:467.200px" width="24" height="24" viewBox="0 0 24 24" fill="none" stroke="#e2e2e2" stroke-width="1.500"><defs><linearGradient id="gfB" x1="1" y1="0" x2="0" y2="1"><stop offset="0" stop-color="#f4f4f4"/><stop offset="1" stop-color="#555"/></linearGradient></defs><path d="M1.900 11.100 L10.600 2.400 L14.300 6.800 L6.300 14.800 Z" fill="url(#gfB)" stroke="none"/><path d="M8.700 17.300 L17.400 9.200 L21.800 13 L13.100 21 Z" fill="url(#gfB)" stroke="none"/><path d="M5 19.300 L18.700 6.100" stroke-width="1.400"/><circle cx="3.800" cy="20.500" r="1.900" fill="#3b3b3b" stroke-width="1.300"/><circle cx="19.900" cy="4.900" r="1.900" fill="#3b3b3b" stroke-width="1.300"/></svg>
<div class="t" style="left:83px;top:474.500px;font-size:10.200px;letter-spacing:-0.100px;font-weight:bold;color:#fff">塗りつぶしツール</div>
<svg style="left:57px;top:494px" width="14" height="22" viewBox="0 0 14 22" fill="none" stroke="#ece6e0" stroke-width="1.400" stroke-linecap="round" stroke-linejoin="round"><path d="M1.400 1.700 H12.800 V7 C12.800 11 10.500 13.400 7.100 13.400 C3.700 13.400 1.400 11 1.400 7 Z"/><path d="M7.100 13.400 V20.300 M1.900 20.300 H12.500"/><path d="M7.900 9.100 L11.600 3.600"/></svg>
<div class="t" style="left:83px;top:500.500px;font-size:10.200px;letter-spacing:-0.100px;font-weight:bold;color:#fff">透明度ツール</div>
<div class="abs" style="left:6px;top:456px;width:39.500px;height:42.500px;border:1.500px solid #d8356d"></div>
<svg style="left:184px;top:491px" width="48" height="22" viewBox="0 0 48 22"><path d="M2 11 L18.500 1.500 L16 8.500 C26 7.500 36 7 45.500 8.500 L45.500 11 C36 11.500 26 12 16.500 14 L19.500 20.500 Z" fill="#ee3a7a" stroke="#ee3a7a" stroke-width="1" stroke-linejoin="round"/></svg>
</div>

</div>
</body>
</html>
